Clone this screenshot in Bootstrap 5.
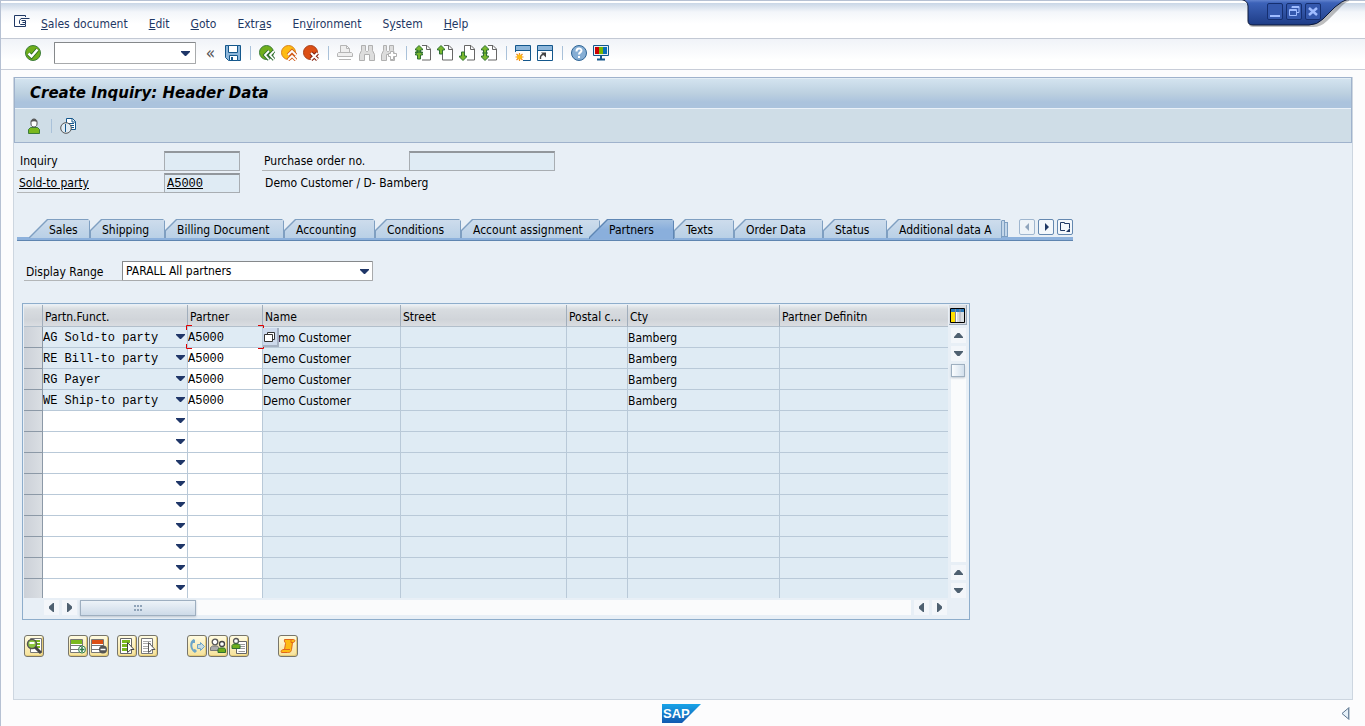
<!DOCTYPE html>
<html lang="en">
<head>
<meta charset="utf-8">
<meta name="viewport" content="width=device-width, initial-scale=1">
<title>Create Inquiry: Header Data</title>
<link href="https://cdn.jsdelivr.net/npm/bootstrap@5.3.0/dist/css/bootstrap.min.css" rel="stylesheet">
<style>
:root{--ui:"DejaVu Sans Condensed","DejaVu Sans",sans-serif;--line:#b9c9d8;--cell:#dfebf4;--navy:#1f3864;
 --arrow:url("data:image/svg+xml,%3Csvg xmlns='http://www.w3.org/2000/svg' width='9' height='5'%3E%3Cpath d='M0 0h9v1L5 5H4L0 1z' fill='%231f3668'/%3E%3C/svg%3E")}
body{font:12px/16px var(--ui);color:#000;background:#fcfcfd;border-left:1px solid #b6c1d3}
button{padding:0;border:0;background:none;line-height:1;color:inherit;font:inherit}
svg{display:block}
/* menu and system toolbar */
.menubar{height:39px;padding:10px 13px 0;background:linear-gradient(#b6c1d3 0 1px,#fff 1px 3px,#c9d6e6 3px,#f3f6fa 12px,#fff 24px);border-bottom:1px solid #c3c9d4}
.menubar ul{gap:21px;margin-left:11px}
.menubar button{margin-bottom:6px}
.menubar a{color:var(--navy);text-decoration:none}
.toolbar{height:31px;padding:0 24px 2px;gap:6px;background:linear-gradient(#f0f3f8,#fff 70%);border-bottom:1px solid #c8cdd8}
.sep{width:1px;height:14px;margin:0 2px 0 3px;background:#a9c1d9}
.pick{appearance:none;border:1px solid #a8aaac;border-top-color:#85888b;border-left-color:#85888b;border-radius:1px;background:#fff var(--arrow) no-repeat right 3px center;font:12px/16px var(--ui);color:#000;padding:0 18px 0 3px}
.toolbar .pick{width:142px;height:22px;margin-left:7px;background-position:right 5px center}
.chev{width:17px;height:16px;font-size:17px;line-height:14px;color:#555}
/* window buttons over the menu bar */
.winctl{position:absolute;top:0;right:16px;width:108px;height:30px}
.winctl>svg{position:absolute;inset:0}
.winctl .d-flex{position:absolute;left:26px;top:3px;gap:3px}
.winctl button{width:16px;height:17px;border:1px solid #152f70;border-radius:2px;background:#3458ad}
/* main window */
.sheet{margin:7px 12px 0;border:1px solid #cdd6e0;border-top:0;background:#e8eff6}
.headband{border:1px solid #9fb2cc;background:#cfdde7}
.headband h1{margin:0;height:31px;padding:0 15px;font:italic bold 15px/28px "DejaVu Sans",sans-serif;background:linear-gradient(#d3e3ef,#bcd0e0 50%,#abc3dd 80%,#abc3dd);border-top:1px solid #e4eef5;border-bottom:1px solid #eaf1f8}
.apptools{height:33px;padding:0 10px;gap:8px}
.fields{grid-template-columns:147px 76px 22px 147px 146px;grid-auto-rows:20px;row-gap:2px;padding:8px 3px 0}
.caption{border-bottom:1px solid #b3b6b8;padding:2px 2px 0;white-space:nowrap}
.entry{width:100%;border:1px solid #a8adb2;border-top:2px solid #92979c;border-radius:0;background:var(--cell);padding:0 2px;font:12px/14px "Liberation Mono",monospace;color:#000;min-width:0}
/* tabs */
.tabstrip{margin:26px 0 0 3px;width:1056px;border-bottom:3px solid #8db1dc;box-shadow:0 1px #5f85b0;height:21px}
.tabgrid{grid-template-columns:61px 75px 119px 91px 86px 139px 74px 60px 89px 64px 115px 3px 3px;height:18px;margin-left:12px}
.tabgrid button{--s:11px;position:relative;isolation:isolate;text-align:left;padding:2px 0 0 12px;background:#7f9fc1;height:19px;white-space:nowrap;clip-path:polygon(var(--s) 0,calc(100% - 2px) 0,100% 2px,100% 100%,0 100%,0 var(--s))}
.tabgrid button::before{content:"";position:absolute;z-index:-1;inset:1px 1px 0;background:linear-gradient(#cddcec,#b9d0e6);clip-path:polygon(var(--s) 0,100% 0,100% 100%,0 100%,0 var(--s))}
.tabgrid button:first-child{--s:18px;padding-left:20px}
.tabgrid button.active{--s:18px;margin-left:-11px;padding-left:20px;height:20px;background:#5e86b4;z-index:1}
.tabgrid button.active::before{background:linear-gradient(#a3c0e0,#8aafdc 50%)}
.tabgrid i{border:1px solid #7f9fc1;border-left:0;background:#c3d6e9;margin-top:1px;height:17px}
.tabgrid i+i{margin-top:3px;height:15px}
.tabnav{gap:3px}
.tabnav button{width:16px;height:16px;border:1px solid #6488b0;border-radius:2px;background:#f3f7fb}
.tabnav button:disabled{opacity:.55}
.tabpane{padding:21px 8px 42px}
.range{margin-left:2px}
.range label{width:98px;padding-top:3px}
.range .pick{width:251px;height:20px}
/* partner grid */
.gridbox{width:948px;margin-top:22px;border:1px solid #8eadcb;padding:1px}
.partners{width:924px;table-layout:fixed;border-collapse:separate;border-spacing:0}
.partners th{height:22px;font-weight:400;padding:2px 2px 0;background:linear-gradient(#eceff2,#d8dce0 20%,#d0d4d9 70%,#dadde1);border-right:1px solid #a1aebc;border-bottom:1px solid #b2bfcb;white-space:nowrap;line-height:16px}
.partners td{height:21px;padding:1px 0 0 0;background:var(--cell);border-right:1px solid var(--line);border-bottom:1px solid var(--line);white-space:nowrap;position:relative;line-height:16px}
.partners tr>:last-child{border-right:0}
.partners .sel{background:linear-gradient(90deg,#ccd1d8,#dadee3);border-color:#8c99a7;padding:0}
.partners .free{background:#fff}
.partners .sel button{display:block;width:100%;height:18px}
.partners select,.partners .cellbox{display:block;width:100%;height:19px;border:0;padding:0;border-radius:0;font:12px/18px "Liberation Mono",monospace;color:#000}
.partners select{appearance:none;background:transparent var(--arrow) no-repeat right 2px top 6px}
.partners .cellbox{background:transparent}
.partners tr:last-child td{border-bottom:0;height:19px;padding:0}
.match{position:absolute;left:0;top:1px;width:16px;height:19px;background:#cdd9ec;border:1px solid #a5b1c2;border-width:0 2px 2px 0;z-index:2}
.focusframe{position:absolute;left:-2px;top:-2px;width:78px;height:24px;z-index:1;pointer-events:none}
.vbar{width:20px;gap:3px;padding-left:3px}
.vbar .cfg{width:18px;height:20px;margin-left:-2px;padding:2px 1px 0;background:#dadde1;border-right:1px solid #9aa8b8;border-bottom:1px solid #9aa8b8}
.arr{width:15px;height:15px;background:#f3f6fa;display:grid;place-items:center;flex:none}
.trough{background:#fafbfc;width:15px}
.trough b{display:block;width:14px;height:13px;background:linear-gradient(90deg,#fafcfe,#d2dfec);border:1px solid #9eafc0;box-shadow:0 1px 2px #bcc5cf}
.hbar{height:20px;padding:2px 0 3px 20px;gap:3px;width:923px}
.hbar .trough{height:15px}
.hbar .trough b{width:116px;height:16px;background:linear-gradient(#edf3f8,#cddae8);display:grid;place-items:center}
/* row actions */
.actions{margin:15px 0 0 2px}
.actions>div{display:flex;gap:1px}
.actions button{width:20px;height:22px;border:1px solid #77756b;border-radius:3px;background:linear-gradient(#fffbe0,#f6e29a);box-shadow:inset -1px -1px #e6cd7a;padding:1px}
.gap-wide{margin-left:29px}
.foot{height:27px;padding:4px 15px 0 12px}
.foot button{margin-top:3px}
</style>
</head>
<body class="d-flex flex-column min-vh-100 position-relative">

<header>
 <nav class="menubar d-flex align-items-center" aria-label="Main menu">
  <button type="button" aria-label="Menu"><svg width="16" height="13" fill="none" stroke="#1f3864"><path d="M11.500 2V.5h-11v11h11V10M15.500 3.500H7l-1.500 2v3l1 1h5v-4M7.500 5.500h4M8.500 7.500h3"/></svg></button>
  <ul class="list-unstyled d-flex mb-0">
   <li><a href="#"><u>S</u>ales document</a></li><li><a href="#"><u>E</u>dit</a></li><li><a href="#"><u>G</u>oto</a></li><li><a href="#">Extr<u>a</u>s</a></li><li><a href="#">En<u>v</u>ironment</a></li><li><a href="#">S<u>y</u>stem</a></li><li><a href="#"><u>H</u>elp</a></li>
  </ul>
 </nav>
 <div class="winctl">
  <svg width="108" height="30"><defs><linearGradient id="wg" x2="0" y2="1"><stop stop-color="#6f8fd6"/><stop offset=".15" stop-color="#3c62b8"/><stop offset="1" stop-color="#1e3c86"/></linearGradient></defs>
   <path d="M4 0Q8 1 8 6V24Q8 27 12 27H72Q80 27 86 21L98 9Q104 2 108 1V0z" fill="#000" opacity=".25"/><path d="M-2 -1Q7 0 7 6V21Q7 25 12 25H68Q76 25 82 19L94 7Q101 1 107 -1z" fill="url(#wg)" stroke="#0c1838"/></svg>
  <div class="d-flex">
   <button type="button" aria-label="Minimize"><svg width="14" height="15"><path d="M2 12h10" stroke="#9fbcff" stroke-width="2"/></svg></button>
   <button type="button" aria-label="Restore"><svg width="14" height="15" fill="none" stroke="#9fbcff"><path d="M5 4V2.500h7v6h-2M5 3.500h7M2.500 5.500h7v6h-7zM2 6.500h8"/></svg></button>
   <button type="button" aria-label="Close"><svg width="14" height="15"><path d="M3 4l8 7M11 4l-8 7" stroke="#9fbcff" stroke-width="2.500"/></svg></button>
  </div>
 </div>
 <div class="toolbar d-flex align-items-center">
  <button type="button" aria-label="Enter"><svg width="16" height="16"><circle cx="8" cy="8" r="7.500" fill="#6fae1b" stroke="#3c7d3a"/><path d="M3.500 8.500l3 3 6-7" fill="none" stroke="#27661f" stroke-width="4"/><path d="M3.500 8.500l3 3 6-7" fill="none" stroke="#fff" stroke-width="2.500"/></svg></button>
  <select class="pick" aria-label="Command"><option></option></select>
  <button type="button" class="chev" aria-label="Collapse">«</button>
  <button type="button" aria-label="Save"><svg width="16" height="16"><path d="M.5.5h15v15h-12l-3-3z" fill="#8db6da" stroke="#14578c"/><path d="M3.500.5h9v7h-9zM4.500 10.500h8v5h-8z" fill="#fff" stroke="#14578c"/><path d="M6 12h2v3H6z" fill="#14578c"/></svg></button>
  <span class="sep"></span>
  <button type="button" aria-label="Back"><svg width="16" height="16"><circle cx="7.500" cy="7.500" r="7" fill="#6fae1b" stroke="#3c7d3a"/><path d="M10 6l-4 4 4 4.500M15 6l-4 4 4 4.500" fill="none" stroke="#2c6a32" stroke-width="3.500"/><path d="M10 6l-4 4 4 4.500M15 6l-4 4 4 4.500" fill="none" stroke="#fff" stroke-width="1.800"/></svg></button>
  <button type="button" aria-label="Exit"><svg width="16" height="16"><circle cx="7.500" cy="7.500" r="7" fill="#fdbb12" stroke="#d9821a"/><path d="M7 10l4-4 4 4M7 15l4-4 4 4" fill="none" stroke="#cf5a1c" stroke-width="3.500"/><path d="M7 10l4-4 4 4M7 15l4-4 4 4" fill="none" stroke="#fff" stroke-width="1.800"/></svg></button>
  <button type="button" aria-label="Cancel"><svg width="16" height="16"><circle cx="7.500" cy="7.500" r="7" fill="#dc4f14" stroke="#a8401a"/><path d="M8 8l6.500 6.500M14.500 8L8 14.500" stroke="#86200e" stroke-width="4"/><path d="M8 8l6.500 6.500M14.500 8L8 14.500" stroke="#fff" stroke-width="2"/></svg></button>
  <span class="sep"></span>
  <button type="button" aria-label="Print" disabled><svg width="16" height="16" fill="#eee" stroke="#b5b5b5"><path d="M3.500 8V.5h6l3 3V8M9.500.5v3h3M1.500 7.500h13l1 1v3H.5v-3zM2 14.500h12"/></svg></button>
  <button type="button" aria-label="Find" disabled><svg width="16" height="16" fill="#ddd" stroke="#b0b0b0"><path d="M2.500 .5h4v5l1 1h1l1-1v-5h4v5l2 4v6h-5v-6h-5v6h-5v-6l2-4z"/></svg></button>
  <button type="button" aria-label="Find next" disabled><svg width="16" height="16" fill="#ddd" stroke="#b0b0b0"><path d="M2.500 .5h3v5l1 1h1l1-1v-5h4v5l1 4v6h-4v-6h-4v6h-5v-6l2-4z"/><path d="M9.500 6.500h3v2h3v3h-3v3h-3v-3h-2v-3h2z" fill="#fff"/></svg></button>
  <span class="sep"></span>
  <button type="button" aria-label="First page"><svg width="16" height="16"><path d="M7 .5h5l3.500 3.500v11H7M11.500 1v3.500H15" fill="#fff" stroke="#666"/><path d="M4 .5L7.500 4v1h-2v2h2v1L4 7 .5 8V7M4 .5L.5 4v1h2v2h-2M.5 9L4 5.500 7.500 9v1h-2v4h-3v-4h-2z" fill="#7ab82e" stroke="#2f7033"/></svg></button>
  <button type="button" aria-label="Previous page"><svg width="16" height="16"><path d="M7 .5h5l3.500 3.500v11h-10V9M11.500 1v3.500H15" fill="#fff" stroke="#666"/><path d="M4 .5L7.500 4v1h-2v4h-3V5h-2V4z" fill="#7ab82e" stroke="#2f7033"/></svg></button>
  <button type="button" aria-label="Next page"><svg width="16" height="16"><path d="M5.500 7V.5h6.500l3.500 3.500v11H8M11.500 1v3.500H15" fill="#fff" stroke="#666"/><path d="M4 15.500L.5 12v-1h2V7h3v4h2v1z" fill="#7ab82e" stroke="#2f7033"/></svg></button>
  <button type="button" aria-label="Last page"><svg width="16" height="16"><path d="M7 .5h5l3.500 3.500v11H7M11.500 1v3.500H15" fill="#fff" stroke="#666"/><path d="M4 .5L7.500 4v1h-2v6h2v1L4 15.500.5 12v-1h2V5h-2V4z" fill="#7ab82e" stroke="#2f7033"/><path d="M1 8h6" stroke="#2f7033"/></svg></button>
  <span class="sep"></span>
  <button type="button" aria-label="New session"><svg width="16" height="16"><path d="M.5.500h15v15H8M.5.500V7" fill="#fff" stroke="#14578c"/><path d="M1 1h14v4H1z" fill="#8db6da"/><path d="M1 5.500h14" stroke="#14578c"/><path d="M4.500 8v8M.5 12h8M1.500 9l6 6M7.500 9l-6 6" stroke="#f08a1c" stroke-width="1.200"/><circle cx="4.500" cy="12" r="2.500" fill="#fdbb12"/></svg></button>
  <button type="button" aria-label="Create shortcut"><svg width="16" height="16"><path d="M.5.5h15v15H.5z" fill="#fff" stroke="#14578c"/><path d="M1 1h14v4H1z" fill="#8db6da"/><path d="M1 5.500h14" stroke="#14578c"/><path d="M3.500 14c-.5-3 1-4.500 3-4.500" fill="none" stroke="#444" stroke-width="1.500"/><path d="M4 7.500h5v5z" fill="#444"/></svg></button>
  <span class="sep"></span>
  <button type="button" aria-label="Help"><svg width="16" height="16"><circle cx="8" cy="8" r="7.500" fill="#86aed4" stroke="#2f6596"/><path d="M5.500 6.500c0-4 5-3.500 5-1 0 2-2.500 1.800-2.500 4M8 11v2" fill="none" stroke="#fff" stroke-width="2"/></svg></button>
  <button type="button" aria-label="Customize layout"><svg width="16" height="16"><path d="M.5.5h15v10H.5z" fill="#e8f0f6" stroke="#14578c"/><path d="M2 2h4v7H2z" fill="#c00"/><path d="M6 2h4v7H6z" fill="#7ab800"/><path d="M10 2h4v7h-4z" fill="#0a70b8"/><path d="M8 11v4M4 14.500h8" stroke="#14578c" stroke-width="2"/></svg></button>
 </div>
</header>

<main class="sheet flex-grow-1">
 <div class="headband">
  <h1>Create Inquiry: Header Data</h1>
  <div class="apptools d-flex align-items-center">
   <button type="button" aria-label="Display sold-to party"><svg width="18" height="16"><path d="M3.500 15.500v-4l2-2h7l2 2v4z" fill="#7ab81e" stroke="#3c7d3a"/><path d="M6 4c0-4 6-4 6 0v2c0 4-6 4-6 0z" fill="#fff" stroke="#555"/><path d="M6 4c0-4 6-4 6 0-2-1-4-1-6 0z" fill="#555"/></svg></button>
   <span class="sep m-0"></span>
   <button type="button" aria-label="Document overview"><svg width="17" height="16"><path d="M6.500.5h6l3 3v8h-9z" fill="#fff" stroke="#14578c"/><path d="M12 .5v3.500h3.500M8 5.500h6M8 7.500h6M10 9.500h4" fill="none" stroke="#14578c"/><circle cx="6" cy="10" r="5.300" fill="#e0ebf3" stroke="#555"/><path d="M5.500 6v8" stroke="#14578c"/></svg></button>
  </div>
 </div>

 <form class="fields d-grid">
  <label class="caption" for="inq">&#8202;Inquiry</label><input class="entry" id="inq" type="text"><span></span>
  <label class="caption" for="po">Purchase order no.</label><input class="entry" id="po" type="text">
  <label class="caption" for="sold"><u>Sold-to party</u></label><input class="entry text-decoration-underline" id="sold" type="text" value="A5000"><span></span>
  <span class="caption border-0">&#8202;Demo Customer / D- Bamberg</span>
 </form>

 <div class="tabstrip d-flex justify-content-between">
  <div class="tabgrid d-grid">
   <button type="button">Sales</button><button type="button">Shipping</button><button type="button">Billing Document</button><button type="button">Accounting</button><button type="button">Conditions</button><button type="button">Account assignment</button><button type="button" class="active">Partners</button><button type="button">Texts</button><button type="button">Order Data</button><button type="button">Status</button><button type="button">Additional data A</button><i></i><i></i>
  </div>
  <div class="tabnav d-flex">
   <button type="button" aria-label="Previous tab" disabled><svg width="14" height="14"><path d="M9 3v8L5 7z" fill="#4a6a90"/></svg></button>
   <button type="button" aria-label="Next tab"><svg width="14" height="14"><path d="M6 3v8l4-4z" fill="#1f3864"/></svg></button>
   <button type="button" aria-label="Tab list"><svg width="14" height="14"><path d="M7 10.500H2.500v-8h4v1h5V8" fill="none" stroke="#1f3864"/><path d="M8 12h4V8z" fill="#1f3864"/></svg></button>
  </div>
 </div>

 <section class="tabpane">
  <div class="range d-flex">
   <label class="caption" for="rng">Display Range</label>
   <select class="pick" id="rng"><option>PARALL All partners</option></select>
  </div>

  <div class="gridbox">
   <div class="d-flex">
    <table class="partners">
     <colgroup><col style="width:19px"><col style="width:145px"><col style="width:75px"><col style="width:138px"><col style="width:166px"><col style="width:61px"><col style="width:152px"><col></colgroup>
     <thead><tr><th></th><th>Partn.Funct.</th><th>Partner</th><th>Name</th><th>Street</th><th>Postal c...</th><th>Cty</th><th>Partner Definitn</th></tr></thead>
     <tbody id="rows"></tbody>
    </table>
    <div class="vbar d-flex flex-column">
     <button type="button" class="cfg" aria-label="Table settings"><svg width="15" height="15"><path d="M.5.5h14v14H.5z" fill="#fff" stroke="#000"/><path d="M1 1h13v3H1z" fill="#2878b8"/><path d="M1 4h4v10H1z" fill="#ffe000"/><path d="M7 4h2v10H7zM11 4h3v10h-3z" fill="#d8dde0"/><path d="M5.500 1v13M10 1v13" stroke="#889"/></svg></button>
     <button type="button" class="arr" aria-label="Scroll up"><svg width="9" height="5"><path d="M0 5V4l3.500-4h2L9 4v1z" fill="#4e6070"/></svg></button>
     <button type="button" class="arr" aria-label="Scroll down"><svg width="9" height="5"><path d="M0 0v1l3.500 4h2L9 1V0z" fill="#4e6070"/></svg></button>
     <div class="trough flex-grow-1"><b></b></div>
     <button type="button" class="arr" aria-label="Scroll up"><svg width="9" height="5"><path d="M0 5V4l3.500-4h2L9 4v1z" fill="#4e6070"/></svg></button>
     <button type="button" class="arr" aria-label="Scroll down"><svg width="9" height="5"><path d="M0 0v1l3.500 4h2L9 1V0z" fill="#4e6070"/></svg></button>
    </div>
   </div>
   <div class="hbar d-flex">
    <button type="button" class="arr" aria-label="Scroll left"><svg width="5" height="9"><path d="M5 0H4L0 3.500v2L4 9h1z" fill="#4e6070"/></svg></button>
    <button type="button" class="arr" aria-label="Scroll right"><svg width="5" height="9"><path d="M0 0h1l4 3.500v2L1 9H0z" fill="#4e6070"/></svg></button>
    <div class="trough flex-grow-1"><b><svg width="9" height="6"><path d="M0 1h9M0 5h9" stroke="#8fa3b8" stroke-width="2" stroke-dasharray="2 1"/></svg></b></div>
    <button type="button" class="arr" aria-label="Scroll left"><svg width="5" height="9"><path d="M5 0H4L0 3.500v2L4 9h1z" fill="#4e6070"/></svg></button>
    <button type="button" class="arr" aria-label="Scroll right"><svg width="5" height="9"><path d="M0 0h1l4 3.500v2L1 9H0z" fill="#4e6070"/></svg></button>
   </div>
  </div>

  <div class="actions d-flex">
   <div class="me-4"><button type="button" aria-label="Details"><svg width="16" height="18"><path d="M4.500 1.500h11v14h-11z" fill="#fff" stroke="#777"/><path d="M6 4h8M10 7h4M10 10h4" stroke="#7ab81e" stroke-width="2"/><circle cx="6" cy="7" r="4.500" fill="#8cc63f" stroke="#555" stroke-width="1.500"/><path d="M3.500 6h5" stroke="#fff" stroke-width="2"/><path d="M9 10l6 6" stroke="#444" stroke-width="3"/></svg></button></div>
   <div><button type="button" aria-label="Insert row"><svg width="16" height="18"><path d="M.5 2.500h12v13H.5zM1 8.500h11M1 12.500h11" fill="#fff" stroke="#777"/><path d="M1 3h11v4H1z" fill="#7ab81e"/><circle cx="12" cy="12.500" r="3.500" fill="#fff" stroke="#2f7d4a"/><path d="M9.500 12.500h5M12 10v5" stroke="#2f7d4a" stroke-width="1.500"/></svg></button><button type="button" aria-label="Delete row"><svg width="16" height="18"><path d="M.5 2.500h12v13H.5zM1 8.500h11M1 12.500h11" fill="#fff" stroke="#777"/><path d="M1 3h11v4H1z" fill="#dc4f14"/><circle cx="12" cy="12.500" r="4" fill="#555"/><path d="M9.500 12.500h5" stroke="#fff" stroke-width="1.500"/></svg></button></div>
   <div class="ms-2"><button type="button" aria-label="Select all"><svg width="16" height="18"><path d="M1.500 1.500h11v15h-11z" fill="#fff" stroke="#666"/><path d="M3 4.500h8M3 8.500h8M3 12.500h8" stroke="#7ab81e" stroke-width="3"/><path d="M8.500 5.500l6.500 7h-3l-3.500 3z" fill="#fff" stroke="#444"/></svg></button><button type="button" aria-label="Deselect all"><svg width="16" height="18"><path d="M1.500 1.500h11v15h-11z" fill="#fff" stroke="#777"/><path d="M3 4.500h8M3 6.500h8M3 9.500h5M3 11.500h5M3 14.500h8" stroke="#aaa"/><path d="M8.500 5.500l6.500 7h-3l-3.500 3z" fill="#fff" stroke="#555"/></svg></button></div>
   <div class="gap-wide"><button type="button" aria-label="Call partner"><svg width="16" height="18"><path d="M4.500 2c-5 3-4 11 1.500 14l2-2-2-2-1.500.5C3 10 3 8 4 6h2V3z" fill="#6da5c8"/><path d="M8.500 7.500h3v-2l4 4-4 4v-2h-3z" fill="#c8dce0" stroke="#6da5c8"/></svg></button><button type="button" aria-label="Partner list"><svg width="16" height="18"><circle cx="5" cy="5" r="2.800" fill="#fff" stroke="#555" stroke-width="1.300"/><path d="M.5 13.500v-3l2-1.500h5l1 1.500v3z" fill="#aaa" stroke="#777"/><circle cx="12" cy="7" r="2.500" fill="#fff" stroke="#444" stroke-width="1.300"/><path d="M8 15.500v-3l1.500-1.500h5l1 1.500v3z" fill="#6fae1b" stroke="#2f7033"/></svg></button><button type="button" aria-label="Partner details"><svg width="16" height="18"><path d="M8 4.500h7.500v12h-10v-5" fill="#fff" stroke="#666"/><path d="M8 7.500h6M9 9.500h5M9 11.500h5M7.500 14.500h6.500" stroke="#999"/><circle cx="5" cy="4" r="2.500" fill="#fff" stroke="#555" stroke-width="1.300"/><path d="M1 11.500v-3L2.500 7h5L9 8.500v3z" fill="#6fae1b" stroke="#2f7033"/></svg></button></div>
   <div class="gap-wide"><button type="button" aria-label="Texts"><svg width="16" height="18"><path d="M4.500 2.500h9c2 0 2 3-1 3l-1 7c-.5 3-2 3-4 3h-6c-1-2 .5-3 3-3l1-6c.3-1-2-2-1-3.500z" fill="#fdbb12" stroke="#e0661a"/><path d="M3 12.500h7M11 3v2.500h2" fill="none" stroke="#e0661a"/></svg></button></div>
  </div>
 </section>
</main>

<footer class="foot d-flex">
 <div class="col"></div>
 <svg width="39" height="20" role="img" aria-label="SAP"><defs><linearGradient id="sg" x2="0" y2="1"><stop stop-color="#18a4e8"/><stop offset="1" stop-color="#1259b0"/></linearGradient></defs><path d="M0 0h39L20 19H0z" fill="url(#sg)"/><text x="1" y="14" font-family="Liberation Sans,sans-serif" font-weight="700" font-size="13" fill="#fff">SAP</text></svg>
 <div class="col d-flex justify-content-end"><button type="button" class="align-self-start" aria-label="Show status"><svg width="9" height="13"><path d="M7.500 1v11L1 6.500z" fill="#e6f0f8" stroke="#5d7690"/><path d="M8 0v13" stroke="#8a9db0"/></svg></button></div>
</footer>

<script>
const partners=[['AG Sold-to party','A5000'],['RE Bill-to party','A5000'],['RG Payer','A5000'],['WE Ship-to party','A5000']];
const frame='<svg class="focusframe" fill="none" stroke="#e00000"><path d="M6 .5H.5V5M72 .5h5.500V5M6 23.500H.500V19M72 23.500h5.500V19"/></svg>';
const match='<button type="button" class="match" aria-label="Search partner"><svg width="14" height="16" stroke="#333" fill="#fff"><path d="M4.500 3.500h7v7h-7z"/><path d="M1.500 5.500h8v7h-8z"/></svg></button>';
document.getElementById('rows').innerHTML=Array.from({length:13},(_,i)=>{
 const p=partners[i],n=i+1;
 return `<tr><td class="sel"><button type="button" aria-label="Select row ${n}"></button></td>
 <td class="${p?'':'free'}"><select aria-label="Partner function ${n}"><option>${p?p[0]:''}</option></select></td>
 <td class="${i?'free':''}"><input class="cellbox" type="text" aria-label="Partner ${n}" value="${p?p[1]:''}">${i?'':frame}</td>
 <td>${p?'Demo Customer':''}${i?'':match}</td><td></td><td></td><td>${p?'Bamberg':''}</td><td></td></tr>`}).join('');
</script>
<script src="https://cdn.jsdelivr.net/npm/bootstrap@5.3.0/dist/js/bootstrap.bundle.min.js"></script>
</body>
</html>
